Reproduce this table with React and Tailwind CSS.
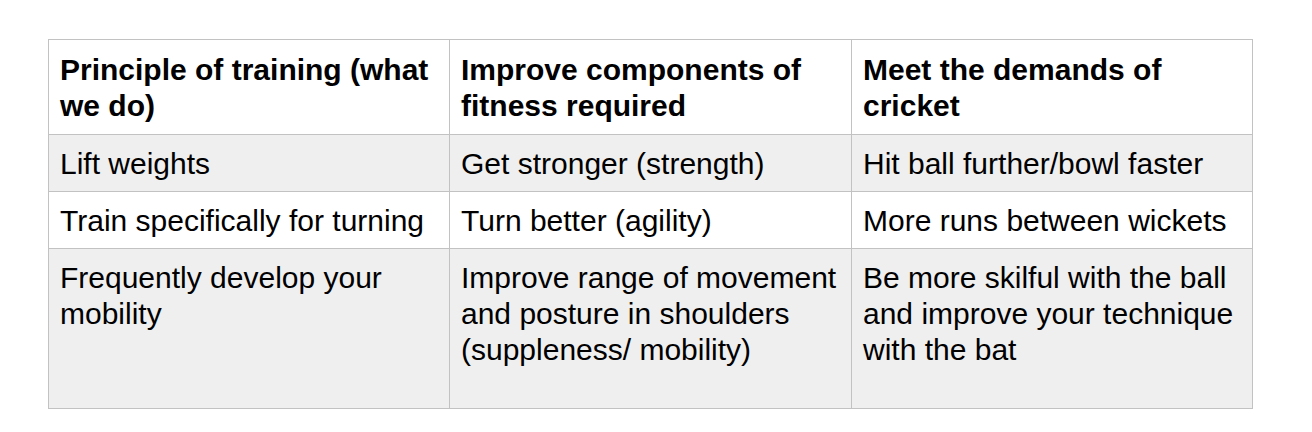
const rows = [
    {
        bg: "bg-white",
        head: true,
        cells: ["Principle of training (what we do)", "Improve components of fitness required", "Meet the demands of cricket"],
    },
    {
        bg: "bg-[#efefef]",
        cells: ["Lift weights", "Get stronger (strength)", "Hit ball further/bowl faster"],
    },
    {
        bg: "bg-white",
        cells: ["Train specifically for turning", "Turn better (agility)", "More runs between wickets"],
    },
    {
        bg: "bg-[#efefef]",
        tall: true,
        cells: [
            "Frequently develop your mobility",
            "Improve range of movement and posture in shoulders (suppleness/ mobility)",
            "Be more skilful with the ball and improve your technique with the bat",
        ],
    },
];

const App = () => {
    return (
        <div className="w-[1312px] h-[432px] bg-white overflow-hidden font-['Liberation_Sans',Arial,sans-serif] text-black">
            <table className="ml-[48px] mt-[39px] border-collapse table-fixed w-[1205px]">
                <colgroup>
                    <col className="w-[401px]" />
                    <col className="w-[402px]" />
                    <col className="w-[401px]" />
                </colgroup>
                <tbody>
                    {rows.map((row, i) => (
                        <tr key={i} className={`${row.bg} ${row.tall ? "h-[160px]" : ""}`}>
                            {row.cells.map((text, j) => (
                                <td
                                    key={j}
                                    className={`border border-[#c2c2c2] align-top pl-[11px] pr-[8px] text-[30px] leading-[36px] ${row.head ? "font-bold pt-[12px] pb-[10px]" : "pt-[11px] pb-[9px]"}`}
                                >
                                    {text}
                                </td>
                            ))}
                        </tr>
                    ))}
                </tbody>
            </table>
        </div>
    )
}

export default App;
